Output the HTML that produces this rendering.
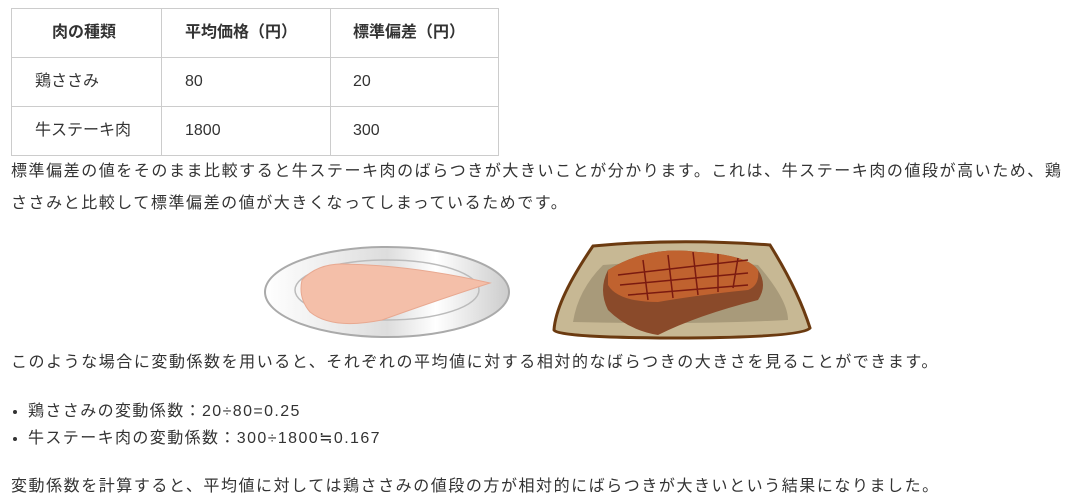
<!DOCTYPE html>
<html><head><meta charset="utf-8"><style>
body{margin:0;width:1074px;height:503px;overflow:hidden;background:#fff;font-family:"Liberation Sans","Noto Sans CJK JP",sans-serif;font-size:16px;color:#333;}
table{position:absolute;left:11px;top:8px;border-collapse:collapse;}
td,th{border:1px solid #ccc;height:48px;padding:0 0 0 23px;text-align:left;vertical-align:middle;line-height:20px;}
th{font-weight:bold;}
.p{position:absolute;left:11px;line-height:32px;white-space:nowrap;letter-spacing:1.55px;}
ul{position:absolute;left:11px;top:398px;margin:0;padding:0 0 0 17px;line-height:27px;letter-spacing:1.4px;}
</style></head><body>
<table>
<tr><th style="padding-left:40px;width:109px">肉の種類</th><th style="width:145px">平均価格（円）</th><th style="width:145px;padding-left:22px">標準偏差（円）</th></tr>
<tr><td>鶏ささみ</td><td>80</td><td style="padding-left:22px">20</td></tr>
<tr><td>牛ステーキ肉</td><td>1800</td><td style="padding-left:22px">300</td></tr>
</table>
<div class="p" style="top:156px">標準偏差の値をそのまま比較すると牛ステーキ肉のばらつきが大きいことが分かります。これは、牛ステーキ肉の値段が高いため、鶏<br>ささみと比較して標準偏差の値が大きくなってしまっているためです。</div>
<svg style="position:absolute;left:262px;top:240px" width="250" height="100">
<defs><linearGradient id="pl" x1="0" x2="1"><stop offset="0" stop-color="#fff"/><stop offset=".5" stop-color="#ddd"/><stop offset=".7" stop-color="#fff"/><stop offset="1" stop-color="#ccc"/></linearGradient></defs>
<ellipse cx="125" cy="52" rx="122" ry="45" fill="url(#pl)" stroke="#aaa" stroke-width="2"/>
<ellipse cx="125" cy="50" rx="92" ry="30" fill="none" stroke="#bbb" stroke-width="1.5"/>
<path d="M40 40 Q55 24 80 24 Q150 25 228 43 Q170 62 120 80 Q70 90 48 72 Q36 58 40 40Z" fill="#f4bfa9" stroke="#e8a890"/>
</svg>
<svg style="position:absolute;left:548px;top:240px" width="268" height="100">
<path d="M45 6 Q130 -2 222 5 Q250 50 262 88 Q255 97 140 98 Q10 98 6 90 Q8 60 45 6Z" fill="#c7b894" stroke="#6b3a10" stroke-width="3"/>
<path d="M55 25 Q140 18 210 25 Q240 60 240 80 Q140 85 25 82 Q30 50 55 25Z" fill="#a89a7a"/>
<path d="M60 30 Q100 5 150 12 Q200 15 210 30 Q220 45 210 60 Q150 75 110 95 Q80 90 60 70 Q50 50 60 30Z" fill="#8a4a2a"/>
<path d="M60 30 Q100 5 150 12 Q200 15 210 30 Q212 45 200 50 Q150 55 110 62 Q70 62 60 45Z" fill="#c0622f"/>
<g stroke="#7a1a10" stroke-width="1.5" fill="none"><path d="M70 35 L200 20M72 45 L200 33M80 55 L200 45M95 20 L100 60M120 15 L125 58M145 12 L150 55M170 14 L170 52M190 18 L185 48"/></g>
</svg>
<div class="p" style="top:347px">このような場合に変動係数を用いると、それぞれの平均値に対する相対的なばらつきの大きさを見ることができます。</div>
<ul><li>鶏ささみの変動係数：20÷80=0.25</li><li>牛ステーキ肉の変動係数：300÷1800≒0.167</li></ul>
<div class="p" style="top:471px">変動係数を計算すると、平均値に対しては鶏ささみの値段の方が相対的にばらつきが大きいという結果になりました。</div>
</body></html>
